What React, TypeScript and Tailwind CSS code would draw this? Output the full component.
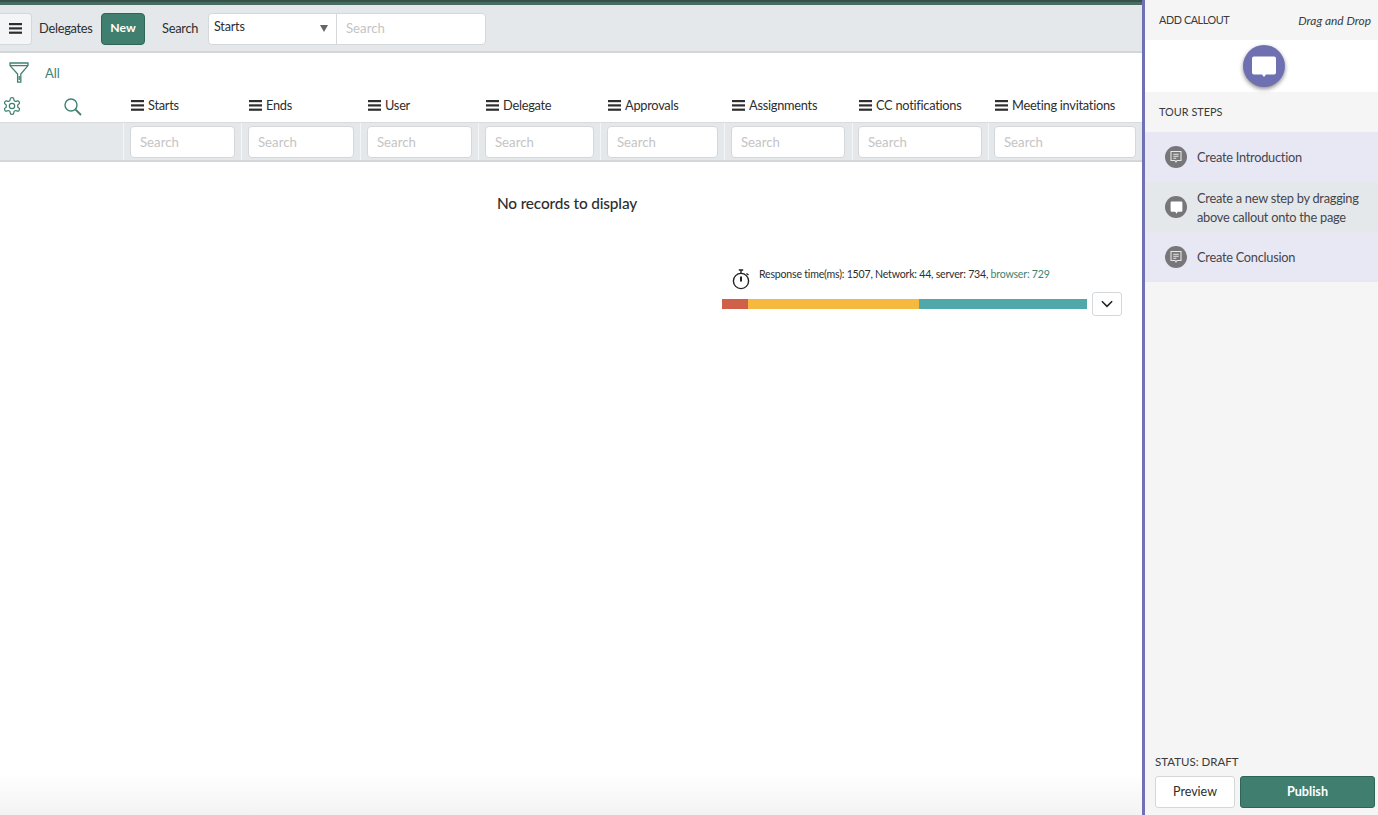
import React from "react";

const cols = ["Starts", "Ends", "User", "Delegate", "Approvals", "Assignments", "CC notifications", "Meeting invitations"];
const cellPad = ["pl-[6px] pr-[6px]", "pl-[6px] pr-[6px]", "pl-[6px] pr-[6px]", "pl-[6px] pr-[6px]", "pl-[6px] pr-[6px]", "pl-[6px] pr-[7px]", "pl-[5px] pr-[6px]", "pl-[5px] pr-[6px]"];
const headPad = ["pl-[8px]", "pl-[8px]", "pl-[8px]", "pl-[8px]", "pl-[8px]", "pl-[8px]", "pl-[7px]", "pl-[7px]"];
const gridClass = "grid grid-cols-[123px_118px_119px_118px_122px_124px_128px_136px_154px]";

function Bars({ className = "" }: { className?: string }) {
  return (
    <svg viewBox="0 0 13 11" className={className} fill="#2e2e2e">
      <rect x="0" y="0" width="13" height="2.2" />
      <rect x="0" y="4.3" width="13" height="2.2" />
      <rect x="0" y="8.6" width="13" height="2.2" />
    </svg>
  );
}

function FilterIcon() {
  return (
    <svg viewBox="0 0 20 21" className="w-[20px] h-[21px]" fill="none" stroke="#3f8270" strokeWidth="1.3">
      <path d="M1 1h18v2.6L11.8 12v8.2H8.6V12L1 3.6z" />
      <path d="M1 3.6h18" />
      <path d="M10.2 14v4" />
    </svg>
  );
}

function StepIcon({ lines }: { lines: boolean }) {
  return (
    <div className="w-[22px] h-[22px] rounded-full bg-[#77777a] flex items-center justify-center shrink-0">
      {lines ? (
        <svg viewBox="0 0 14 14" className="w-[14px] h-[14px]" fill="none" stroke="#e6e6e6" strokeWidth="1.1">
          <path d="M2 1.5h10v9H8l-1 1.5-1-1.5H2z" />
          <path d="M4.3 4.3h5.4M4.3 6.3h5.4M4.3 8.3h3" />
        </svg>
      ) : (
        <svg viewBox="0 0 14 14" className="w-[15px] h-[15px]" fill="#ffffff">
          <path d="M2.5 1.5h9a1 1 0 0 1 1 1v7.5a1 1 0 0 1-1 1H8.2L7 12.8 5.8 11H2.5a1 1 0 0 1-1-1V2.5a1 1 0 0 1 1-1z" />
        </svg>
      )}
    </div>
  );
}

export default function App() {
  return (
    <div className="w-[1378px] h-[815px] overflow-hidden flex bg-white text-[#2e2e2e] font-['Lato','Noto_Sans',sans-serif] text-[13px]">
      <main className="w-[1142px] shrink-0 flex flex-col bg-gradient-to-b from-white from-[95%] to-[#f3f3f3]">
        <div className="h-[5px] bg-[#4a6b60] border-t-2 border-[#34524a]" />
        <div className="h-[48px] pt-[1px] bg-[#e4e8eb] border-b-2 border-[#d3d7d9] flex items-center">
          <button className="w-[32px] h-[32px] bg-[#f4f5f6] border border-[#d5d8da] border-l-0 rounded-r-[4px] flex items-center justify-center">
            <Bars className="w-[13px] h-[11px]" />
          </button>
          <span className="ml-[7px] text-[12.8px] tracking-[-0.26px] w-[53px] whitespace-nowrap">Delegates</span>
          <button className="ml-[9px] w-[44px] h-[32px] bg-[#407f6f] border border-[#2e6557] rounded-[4px] text-white font-bold text-[12.2px]">New</button>
          <span className="ml-[17px] text-[12.8px] tracking-[-0.26px] w-[37px] whitespace-nowrap">Search</span>
          <div className="ml-[9px] h-[32px] w-[278px] flex bg-white border border-[#d5d8da] rounded-[4px]">
            <div className="w-[128px] border-r border-[#d5d8da] flex items-center justify-between pl-[5px] pr-[8px]">
              <span className="text-[12.6px] tracking-[-0.2px] -mt-[2px]">Starts</span>
              <span className="w-0 h-0 border-x-[4px] border-x-transparent border-t-[7px] border-t-[#666]" />
            </div>
            <span className="pl-[9px] self-center text-[#c4c4c4] text-[13.2px] pt-[1px]">Search</span>
          </div>
        </div>
        <div className="h-[37px] flex items-center pl-[9px] pt-[1px]">
          <FilterIcon />
          <span className="ml-[16px] mt-[3px] text-[#3f8270] text-[13px]">All</span>
        </div>
        <div className={`${gridClass} h-[32px] items-center`}>
          <div className="flex items-center pl-[2px]">
            <svg viewBox="0 0 24 24" className="w-[20px] h-[20px]" fill="none" stroke="#3f8270" strokeWidth="1.5" strokeLinejoin="round">
              <path d="M12.2 2h-.4a2 2 0 0 0-2 2v.2a2 2 0 0 1-1 1.7l-.4.3a2 2 0 0 1-2 0l-.2-.1a2 2 0 0 0-2.7.7l-.2.4a2 2 0 0 0 .7 2.7l.2.1a2 2 0 0 1 1 1.7v.5a2 2 0 0 1-1 1.8l-.2.1a2 2 0 0 0-.7 2.7l.2.4a2 2 0 0 0 2.7.7l.2-.1a2 2 0 0 1 2 0l.4.3a2 2 0 0 1 1 1.7v.2a2 2 0 0 0 2 2h.4a2 2 0 0 0 2-2v-.2a2 2 0 0 1 1-1.7l.4-.3a2 2 0 0 1 2 0l.2.1a2 2 0 0 0 2.7-.7l.2-.4a2 2 0 0 0-.7-2.7l-.2-.1a2 2 0 0 1-1-1.8v-.5a2 2 0 0 1 1-1.7l.2-.1a2 2 0 0 0 .7-2.7l-.2-.4a2 2 0 0 0-2.7-.7l-.2.1a2 2 0 0 1-2 0l-.4-.3a2 2 0 0 1-1-1.7V4a2 2 0 0 0-2-2z" />
              <circle cx="12" cy="12" r="3.2" />
            </svg>
            <svg viewBox="0 0 18 18" className="w-[18px] h-[18px] ml-[42px] mt-[2px]" fill="none" stroke="#3f8270" strokeWidth="1.4">
              <circle cx="7" cy="7" r="6" />
              <path d="M11.5 11.5l5.5 5.5" strokeWidth="1.8" />
            </svg>
          </div>
          {cols.map((c, i) => (
            <div key={c} className={`flex items-center ${headPad[i]} whitespace-nowrap -mt-[1px]`}>
              <Bars className="w-[13px] h-[11px] shrink-0" />
              <span className="ml-[4px] text-[12.8px] tracking-[-0.26px]">{c}</span>
            </div>
          ))}
        </div>
        <div className={`${gridClass} h-[40px] bg-[#e4e8eb] border-t border-[#d8dcde] border-b-2 border-b-[#d3d7d9]`}>
          <div />
          {cols.map((c, i) => (
            <div key={c} className={`border-l border-[#f4f5f6] ${cellPad[i]} flex items-center`}>
              <div className="w-full h-[32px] bg-white border border-[#d5d8da] rounded-[4px] flex items-center pl-[9px] pt-[2px] text-[#c4c4c4] text-[13.2px]">Search</div>
            </div>
          ))}
        </div>
        <h2 className="mt-[30px] text-center text-[15.4px] tracking-[-0.15px] font-medium text-[#2e2e2e] pr-[8px] leading-[22px]">No records to display</h2>
        <div className="mt-[52px] ml-[722px] w-[400px]">
          <div className="flex items-start h-[26px]">
            <svg viewBox="0 0 20 22" className="ml-[9px] w-[20px] h-[22px] mt-[2px]" fill="none" stroke="#222" strokeWidth="1.4">
              <circle cx="10" cy="13" r="7.6" />
              <path d="M10 2.2v3.2M7.8 2h4.4M15.5 5.5l2 1.5" />
              <path d="M10 8.5v5" strokeWidth="2" />
            </svg>
            <span className="ml-[8px] mt-[1px] text-[10.6px] tracking-[-0.22px] leading-[14px] whitespace-nowrap">
              Response time(ms): 1507, Network: 44, server: 734, <span className="text-[#3f8270]">browser: 729</span>
            </span>
          </div>
          <div className="flex items-center">
            <div className="w-[365px] h-[10px] flex">
              <div className="w-[26px] bg-[#d1604a]" />
              <div className="w-[171px] bg-[#f5b93f]" />
              <div className="flex-1 bg-[#4fa9aa]" />
            </div>
            <button className="ml-[5px] w-[30px] h-[24px] bg-white border border-[#d5d8da] rounded-[3px] flex items-center justify-center">
              <svg viewBox="0 0 14 9" className="w-[12px] h-[8px]" fill="none" stroke="#222" strokeWidth="1.8">
                <path d="M1 1.2l6 6 6-6" />
              </svg>
            </button>
          </div>
        </div>
      </main>
      <aside className="w-[236px] shrink-0 border-l-[3px] border-[#7070b4] bg-[#f5f5f5] flex flex-col">
        <div className="h-[40px] flex items-center justify-between pl-[14px] pr-[7px] pt-[1px]">
          <span className="text-[#3a3a3a] text-[10.8px] tracking-[-0.4px]">ADD CALLOUT</span>
          <span className="italic text-[#3a3a3a] text-[11.9px]">Drag and Drop</span>
        </div>
        <div className="h-[52px] bg-white flex items-center justify-center">
          <div className="ml-[5px] w-[42px] h-[42px] rounded-full bg-[#6f70b1] shadow-[0_2px_4px_rgba(0,0,0,0.45)] flex items-center justify-center">
            <svg viewBox="0 0 26 24" className="w-[26px] h-[24px]" fill="#ffffff">
              <path d="M3 2.5h20a2 2 0 0 1 2 2v14a2 2 0 0 1-2 2h-8L13 23l-2-2.5H3a2 2 0 0 1-2-2v-14a2 2 0 0 1 2-2z" />
            </svg>
          </div>
        </div>
        <div className="h-[40px] flex items-center pl-[14px] pt-[1px] text-[10.9px] text-[#3a3a3a]">TOUR STEPS</div>
        <div className="h-[50px] bg-[#e8e8f5] flex items-center pl-[20px]">
          <StepIcon lines />
          <span className="ml-[10px] pt-[2px] text-[12.8px] tracking-[-0.26px] text-[#45454d]">Create Introduction</span>
        </div>
        <div className="h-[50px] bg-[#e4e8eb] flex items-center pl-[20px]">
          <StepIcon lines={false} />
          <span className="ml-[10px] pt-[1px] text-[12.8px] tracking-[-0.26px] leading-[19px] text-[#45454d]">Create a new step by dragging<br />above callout onto the page</span>
        </div>
        <div className="h-[50px] bg-[#e8e8f5] flex items-center pl-[20px]">
          <StepIcon lines />
          <span className="ml-[10px] pt-[2px] text-[12.8px] tracking-[-0.26px] text-[#45454d]">Create Conclusion</span>
        </div>
        <div className="flex-1" />
        <div className="pl-[10px] text-[11.5px] text-[#3a3a3a] leading-[16px]">STATUS: DRAFT</div>
        <div className="flex pl-[10px] pr-[3px] pb-[7px] pt-[6px] gap-[5px]">
          <button className="w-[80px] h-[32px] bg-white border border-[#d5d8da] rounded-[3px] text-[12.5px] text-[#2e2e2e]">Preview</button>
          <button className="flex-1 h-[32px] bg-[#407f6f] border border-[#2e6557] rounded-[3px] text-white font-bold text-[12.6px]">Publish</button>
        </div>
      </aside>
    </div>
  );
}
